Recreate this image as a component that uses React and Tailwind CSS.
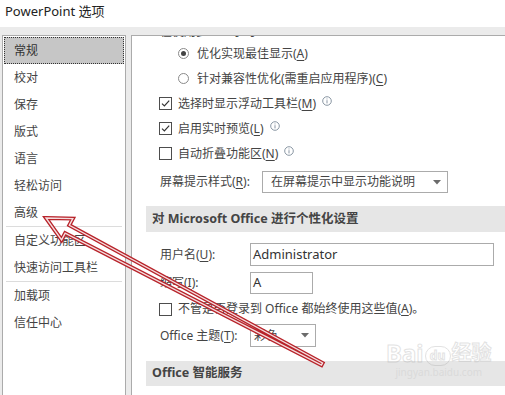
import React from "react";

const F = { fontFamily: '"Noto Sans", "Noto Sans CJK SC", sans-serif' };

function Info() {
  return (
    <svg width="10" height="10" viewBox="0 0 10 10" className="ml-[6px] -mt-[6px] shrink-0">
      <circle cx="5" cy="5" r="4.3" fill="none" stroke="#7d8b99" strokeWidth="0.9" />
      <rect x="4.55" y="4.2" width="0.9" height="3.2" fill="#7d8b99" />
      <rect x="4.55" y="2.5" width="0.9" height="0.9" fill="#7d8b99" />
    </svg>
  );
}

function Radio({ checked }) {
  return (
    <span className="w-[11px] h-[11px] rounded-full border border-[#8a8a8a] bg-white flex items-center justify-center shrink-0">
      {checked && <span className="w-[5px] h-[5px] rounded-full bg-[#444]" />}
    </span>
  );
}

function Check({ checked }) {
  return (
    <span className="w-[13px] h-[13px] border border-[#4d4d4d] bg-white flex items-center justify-center shrink-0">
      {checked && (
        <svg width="11" height="11" viewBox="0 0 11 11">
          <path d="M2 5.6 L4.4 8 L9.2 2.6" fill="none" stroke="#333" strokeWidth="1.2" />
        </svg>
      )}
    </span>
  );
}

const U = ({ children }) => <span className="underline underline-offset-2">{children}</span>;

function Arrowhead() {
  return (
    <svg width="8" height="5" viewBox="0 0 8 5">
      <path d="M0 0 L8 0 L4 4.5 Z" fill="#6b6b6b" />
    </svg>
  );
}

function NavItem({ children, selected }) {
  if (selected)
    return (
      <div className="h-[27px] flex items-center bg-[#c6c6c6] border border-dotted border-[#333] pl-[9px] text-[#333]">
        {children}
      </div>
    );
  return <div className="h-[27px] flex items-center pl-[10px] text-[#444]">{children}</div>;
}

export default function App() {
  const T = [46, 218];
  const tail = [322, 364];
  const dx = tail[0] - T[0], dy = tail[1] - T[1];
  const len = Math.hypot(dx, dy);
  const u = [dx / len, dy / len];
  const p = [-u[1], u[0]];
  const B = [T[0] + 24 * u[0], T[1] + 24 * u[1]];
  const pt = (b, k) => [b[0] + k * p[0], b[1] + k * p[1]];
  const pts = [
    T,
    pt(B, -12),
    pt(B, -4.5),
    pt(tail, -1.2),
    pt(tail, 1.2),
    pt(B, 4.5),
    pt(B, 12),
  ]
    .map((q) => q.join(","))
    .join(" ");

  return (
    <div className="w-[505px] h-[395px] overflow-hidden relative bg-[#ebebeb] text-[12px] text-[#444]" style={F}>
      <div className="h-[27px] bg-white pl-[5px] pt-[3px] text-[13px] leading-[17px] text-[#222]">PowerPoint 选项</div>
      <div className="flex pt-[8px] pl-[2px] h-[368px]">
        {/* left nav */}
        <div className="w-[124px] h-[380px] border border-[#ababab] bg-white p-[1px] shrink-0">
          <NavItem selected>常规</NavItem>
          <NavItem>校对</NavItem>
          <NavItem>保存</NavItem>
          <NavItem>版式</NavItem>
          <NavItem>语言</NavItem>
          <NavItem>轻松访问</NavItem>
          <NavItem>高级</NavItem>
          <div className="h-[1px] mx-[2px] bg-[#dcdcdc]" />
          <NavItem>自定义功能区</NavItem>
          <NavItem>快速访问工具栏</NavItem>
          <div className="h-[1px] mx-[2px] bg-[#dcdcdc]" />
          <NavItem>加载项</NavItem>
          <NavItem>信任中心</NavItem>
        </div>
        {/* right panel */}
        <div className="ml-[5px] flex-1 h-[380px] border-l border-t border-[#ababab] bg-white overflow-hidden">
          <div className="-mt-[20px] flex flex-col">
            <div className="h-[25px] flex items-center pl-[28px] pt-[7px]">
              在使用多个显示时:<Info />
            </div>
            <div className="h-[25px] flex items-center pl-[46px] gap-[8px]">
              <Radio checked />
              <span>优化实现最佳显示(<U>A</U>)</span>
            </div>
            <div className="h-[25px] flex items-center pl-[46px] gap-[8px]">
              <Radio />
              <span>针对兼容性优化(需重启应用程序)(<U>C</U>)</span>
            </div>
            <div className="h-[25px] flex items-center pl-[27px] gap-[6px]">
              <Check checked />
              <span className="flex items-center">选择时显示浮动工具栏(<U>M</U>)<Info /></span>
            </div>
            <div className="h-[25px] flex items-center pl-[27px] gap-[6px]">
              <Check checked />
              <span className="flex items-center">启用实时预览(<U>L</U>)<Info /></span>
            </div>
            <div className="h-[25px] flex items-center pl-[27px] gap-[6px]">
              <Check />
              <span className="flex items-center">自动折叠功能区(<U>N</U>)<Info /></span>
            </div>
            <div className="mt-[4px] h-[24px] flex items-center pl-[28px]">
              <span className="w-[102px] shrink-0">屏幕提示样式(<U>R</U>):</span>
              <div className="w-[186px] h-[22px] border border-[#ababab] flex items-center justify-between pl-[8px] pr-[6px]">
                <span>在屏幕提示中显示功能说明</span>
                <Arrowhead />
              </div>
            </div>
            <div className="mt-[12px] ml-[14px] h-[26px] bg-[#e6e6e6] flex items-center pl-[6px] font-bold text-[12.5px]">
              对 Microsoft Office 进行个性化设置
            </div>
            <div className="mt-[11px] h-[23px] flex items-center pl-[28px]">
              <span className="w-[90px] shrink-0">用户名(<U>U</U>):</span>
              <div className="w-[244px] h-[23px] border border-[#ababab] flex items-center pl-[2px] text-[13px] text-[#333]">Administrator</div>
            </div>
            <div className="mt-[6px] h-[22px] flex items-center pl-[28px]">
              <span className="w-[90px] shrink-0">缩写(<U>I</U>):</span>
              <div className="w-[63px] h-[22px] border border-[#ababab] flex items-center pl-[2px] text-[13px] text-[#333]">A</div>
            </div>
            <div className="mt-[3px] h-[24px] flex items-center pl-[27px] gap-[6px]">
              <Check />
              <span>不管是否登录到 Office 都始终使用这些值(<U>A</U>)。</span>
            </div>
            <div className="mt-[3px] h-[23px] flex items-center pl-[28px]">
              <span className="w-[90px] shrink-0">Office 主题(<U>T</U>):</span>
              <div className="w-[66px] h-[23px] border border-[#ababab] flex items-center justify-between pl-[3px] pr-[6px]">
                <span>彩色</span>
                <Arrowhead />
              </div>
            </div>
            <div className="mt-[14px] ml-[14px] h-[25px] bg-[#e6e6e6] flex items-center pl-[6px] font-bold text-[12.5px]">
              Office 智能服务
            </div>
          </div>
        </div>
      </div>

      {/* red annotation arrow */}
      <svg className="absolute left-0 top-0 pointer-events-none" width="505" height="395">
        <polygon points={pts} fill="none" stroke="#b8232a" strokeWidth="4" strokeLinejoin="miter" />
        <polygon points={pts} fill="none" stroke="#ffffff" strokeOpacity="0.85" strokeWidth="1.4" strokeLinejoin="miter" />
      </svg>

      {/* watermark */}
      <div className="absolute left-[386px] top-[340px] pointer-events-none flex flex-col items-center opacity-[0.28]">
        <div className="flex items-end text-[24px] leading-[26px] font-bold text-white" style={{ WebkitTextStroke: "1px #9a9a9a" }}>
          <span>Bai</span>
          <span className="mx-[1px] w-[26px] h-[20px] rounded-full border border-[#9a9a9a] text-[12px] leading-[18px] text-center">du</span>
          <span className="text-[20px]">经验</span>
        </div>
        <div className="text-[10px] leading-[12px] text-[#bbb]">jingyan.baidu.com</div>
      </div>
    </div>
  );
}
